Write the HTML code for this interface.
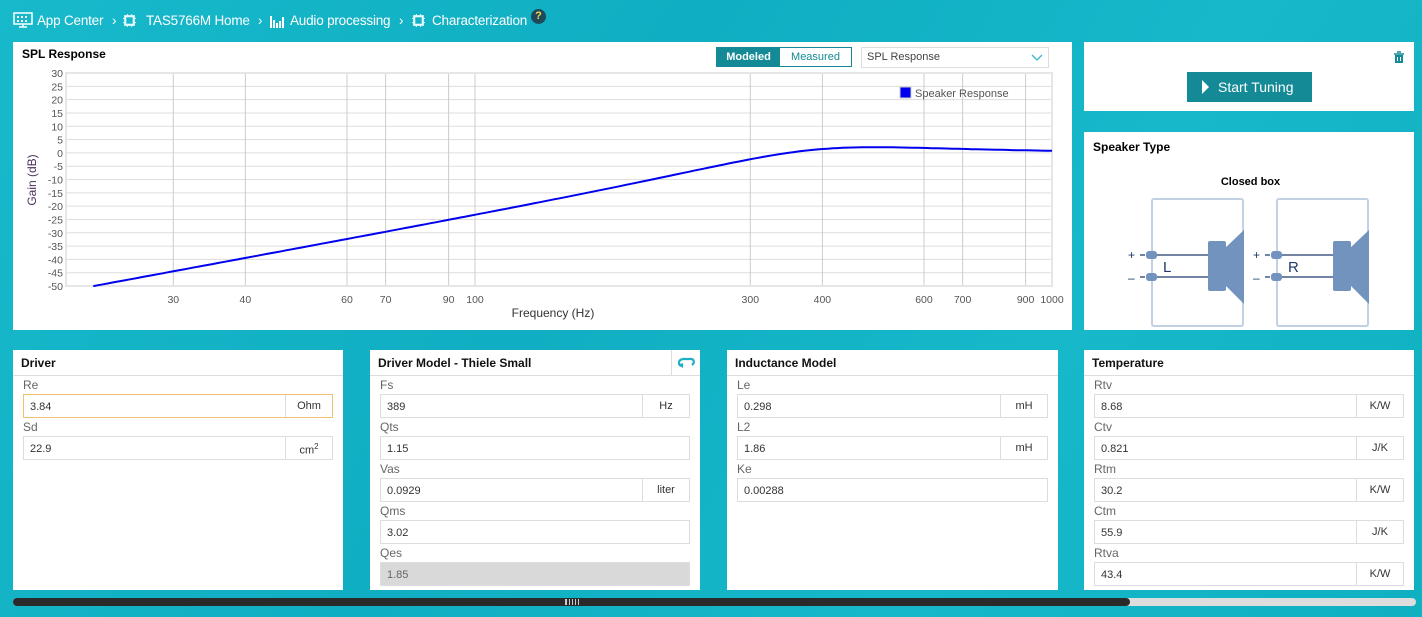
<!DOCTYPE html>
<html><head><meta charset="utf-8">
<style>
*{box-sizing:border-box;margin:0;padding:0}
body{width:1422px;height:617px;overflow:hidden;font-family:"Liberation Sans",Arial,sans-serif;background:linear-gradient(120deg,#17b9cb 0%,#10aec2 40%,#16b8ca 70%,#0fb0c2 100%);position:relative}
.c{position:absolute;top:13px;color:#fff;font-size:13.5px;white-space:nowrap;letter-spacing:-0.2px}
.panel{position:absolute;background:#fff}
.hd{height:26px;border-bottom:1px solid #ddd;font-weight:bold;font-size:12px;padding:6px 8px;color:#111}
.lbl{font-size:12px;color:#666;margin:2px 0 0 10px;height:15px;line-height:15px}
.inp{margin:1px 10px 0 10px;height:24px;border:1px solid #ddd;display:flex;font-size:11px;color:#333}
.inp .v{flex:1;padding:6px 6px}
.inp .u{width:47px;border-left:1px solid #ddd;text-align:center;padding-top:5px}
</style></head><body>
<svg width="20" height="16" viewBox="0 0 20 16" style="position:absolute;left:13px;top:12px"><rect x="1" y="1" width="18" height="11" fill="none" stroke="#fff" stroke-width="1.5"/><g fill="#fff"><rect x="4" y="4" width="2" height="2"/><rect x="8" y="4" width="2" height="2"/><rect x="12" y="4" width="2" height="2"/><rect x="4" y="8" width="2" height="2"/><rect x="8" y="8" width="2" height="2"/><rect x="12" y="8" width="2" height="2"/></g><path d="M10 12v3M6 15h8" stroke="#fff" stroke-width="1.5"/></svg>
<div class="c" style="left:37px">App Center</div>
<div class="c" style="left:112px">›</div>
<svg width="15" height="15" viewBox="0 0 14 14" style="position:absolute;left:122px;top:13px"><rect x="3" y="3" width="8" height="8" fill="none" stroke="#e8fafc" stroke-width="2"/><g stroke="#e8fafc"><path d="M1 5h2M1 9h2M11 5h2M11 9h2M5 1v2M9 1v2M5 11v2M9 11v2"/></g></svg>
<div class="c" style="left:146px">TAS5766M Home</div>
<div class="c" style="left:258px">›</div>
<svg width="16" height="14" viewBox="0 0 16 14" style="position:absolute;left:269px;top:14px" fill="#fff"><rect x="1" y="2" width="2" height="12"/><rect x="4" y="6" width="2" height="8"/><rect x="7" y="9" width="2" height="5"/><rect x="10" y="7" width="2" height="7"/><rect x="13" y="3" width="2" height="11"/></svg>
<div class="c" style="left:290px">Audio processing</div>
<div class="c" style="left:399px">›</div>
<svg width="15" height="15" viewBox="0 0 14 14" style="position:absolute;left:411px;top:13px"><rect x="3" y="3" width="8" height="8" fill="none" stroke="#e8fafc" stroke-width="2"/><g stroke="#e8fafc"><path d="M1 5h2M1 9h2M11 5h2M11 9h2M5 1v2M9 1v2M5 11v2M9 11v2"/></g></svg>
<div class="c" style="left:432px">Characterization</div>
<div style="position:absolute;left:531px;top:9px;width:15px;height:15px;border-radius:50%;background:#1c4a5a;color:#ffd84a;font-size:11px;font-weight:bold;text-align:center;line-height:15px">?</div>

<div class="panel" style="left:13px;top:42px;width:1059px;height:288px">
<div style="position:absolute;left:9px;top:5px;font-weight:bold;font-size:12px">SPL Response</div>
<div style="position:absolute;left:703px;top:5px;width:136px;height:20px;border:1px solid #148a96;display:flex;font-size:11px">
<div style="width:63px;background:#148a96;color:#fff;font-weight:bold;text-align:center;line-height:18px">Modeled</div>
<div style="flex:1;color:#148a96;text-align:center;line-height:18px">Measured</div></div>
<div style="position:absolute;left:848px;top:5px;width:188px;height:21px;border:1px solid #ddd;font-size:11px;color:#444;padding:3px 5px">SPL Response<svg width="12" height="8" style="position:absolute;right:5px;top:6px"><path d="M1 1l5 5 5-5" fill="none" stroke="#3cb4d0" stroke-width="1.3"/></svg></div>
</div>
<svg id="chart" width="1422" height="340" style="position:absolute;left:0;top:0"></svg>

<div class="panel" style="left:1084px;top:42px;width:330px;height:69px">
<svg width="12" height="13" viewBox="0 0 12 13" style="position:absolute;left:309px;top:9px"><path d="M4 1h4M1 3h10" stroke="#148a96" stroke-width="1.6"/><path d="M2 4h8v8H2z" fill="#148a96"/><path d="M4.5 6v4M7.5 6v4" stroke="#fff" stroke-width="1"/></svg>
<div style="position:absolute;left:103px;top:30px;width:125px;height:30px;background:#148a96;color:#fff;font-size:14px;line-height:30px;padding-left:31px">Start Tuning</div>
<svg width="8" height="14" style="position:absolute;left:118px;top:38px"><path d="M0 0L7 7 0 14z" fill="#fff"/></svg>
</div>

<div class="panel" style="left:1084px;top:132px;width:330px;height:198px">
<div style="position:absolute;left:9px;top:8px;font-weight:bold;font-size:12px">Speaker Type</div>
<div style="position:absolute;left:0;width:330px;top:44px;text-align:center;font-weight:bold;font-size:11px;padding-left:3px">Closed box</div>
<svg width="330" height="198" style="position:absolute;left:0;top:0">
<g id="spk">
<rect x="68" y="67" width="91" height="127" fill="none" stroke="#c2d0e3" stroke-width="2" rx="2"/>
<path d="M63 123h61M63 145h61" stroke="#1d3a6a" stroke-width="1.2"/>
<text x="44" y="127" font-size="12" fill="#1d3a6a" font-family="Liberation Sans">+</text>
<text x="44" y="150" font-size="12" fill="#1d3a6a" font-family="Liberation Sans">–</text>
<path d="M56 123h5M56 145h5" stroke="#1d3a6a" stroke-width="1.2"/>
<rect x="62" y="119" width="11" height="8" rx="3" fill="#7393bf"/>
<rect x="62" y="141" width="11" height="8" rx="3" fill="#7393bf"/>
<rect x="124" y="109" width="18" height="50" rx="2" fill="#7393bf"/>
<path d="M140 117L160 98V172L140 152z" fill="#7393bf"/>
</g>
<use href="#spk" x="125"/>
<text x="79" y="140" font-size="15" fill="#1d3a6a" font-family="Liberation Sans">L</text>
<text x="204" y="140" font-size="15" fill="#1d3a6a" font-family="Liberation Sans">R</text>
</svg>
</div>

<div class="panel" style="left:13px;top:350px;width:330px;height:240px">
<div class="hd">Driver</div>
<div class="lbl">Re</div><div class="inp" style="border-color:#f0c070"><div class="v">3.84</div><div class="u">Ohm</div></div>
<div class="lbl">Sd</div><div class="inp"><div class="v">22.9</div><div class="u">cm<sup style="font-size:8px">2</sup></div></div>
</div>

<div class="panel" style="left:370px;top:350px;width:330px;height:240px">
<div class="hd">Driver Model - Thiele Small</div>
<div style="position:absolute;right:0;top:0;width:29px;height:26px;border-left:1px solid #ddd;border-bottom:1px solid #ddd"><svg width="18" height="12" viewBox="0 0 18 12" style="margin:7px 5px"><path d="M4 9C1 7 1 3 6 2h8c3 0 4 4 1 6" fill="none" stroke="#1fb0c8" stroke-width="2.2"/><path d="M1 8l5 3 0-5z" fill="#1fb0c8"/></svg></div>
<div class="lbl">Fs</div><div class="inp"><div class="v">389</div><div class="u">Hz</div></div>
<div class="lbl">Qts</div><div class="inp"><div class="v">1.15</div></div>
<div class="lbl">Vas</div><div class="inp"><div class="v">0.0929</div><div class="u">liter</div></div>
<div class="lbl">Qms</div><div class="inp"><div class="v">3.02</div></div>
<div class="lbl">Qes</div><div class="inp" style="background:#d9d9d9"><div class="v" style="color:#666">1.85</div></div>
</div>

<div class="panel" style="left:727px;top:350px;width:331px;height:240px">
<div class="hd">Inductance Model</div>
<div class="lbl">Le</div><div class="inp"><div class="v">0.298</div><div class="u">mH</div></div>
<div class="lbl">L2</div><div class="inp"><div class="v">1.86</div><div class="u">mH</div></div>
<div class="lbl">Ke</div><div class="inp"><div class="v">0.00288</div></div>
</div>

<div class="panel" style="left:1084px;top:350px;width:330px;height:240px">
<div class="hd">Temperature</div>
<div class="lbl">Rtv</div><div class="inp"><div class="v">8.68</div><div class="u">K/W</div></div>
<div class="lbl">Ctv</div><div class="inp"><div class="v">0.821</div><div class="u">J/K</div></div>
<div class="lbl">Rtm</div><div class="inp"><div class="v">30.2</div><div class="u">K/W</div></div>
<div class="lbl">Ctm</div><div class="inp"><div class="v">55.9</div><div class="u">J/K</div></div>
<div class="lbl">Rtva</div><div class="inp"><div class="v">43.4</div><div class="u">K/W</div></div>
</div>

<div style="position:absolute;left:13px;top:598px;width:1403px;height:8px;border-radius:4px;background:#ddd"></div>
<div style="position:absolute;left:13px;top:598px;width:1117px;height:8px;border-radius:4px;background:#2a2a2a"></div>
<div style="position:absolute;left:565px;top:599px;width:14px;height:6px;border-left:1px solid #ccc;border-right:1px solid #ccc;background:repeating-linear-gradient(90deg,#ccc 0 1px,transparent 1px 3px)"></div>

<script>
(function(){
var s=document.getElementById('chart'),h='';
function X(f){return 475+577*Math.log10(f/100);}
function Y(d){return 73+(30-d)*2.6625;}
for(var d=30;d>=-50;d-=5){var y=Y(d);h+='<line x1="66" x2="1052" y1="'+y+'" y2="'+y+'" stroke="#ddd"/>';
h+='<text x="63" y="'+(y+4)+'" text-anchor="end" font-size="10.5" fill="#555" font-family="Liberation Sans">'+d+'</text>';}
[30,40,60,70,90,100,300,400,600,700,900,1000].forEach(function(f){var x=X(f);h+='<line x1="'+x+'" x2="'+x+'" y1="73" y2="286" stroke="#ccc"/>';
h+='<text x="'+x+'" y="303" text-anchor="middle" font-size="10.5" fill="#555" font-family="Liberation Sans">'+f+'</text>';});
h+='<rect x="66" y="73" width="986" height="213" fill="none" stroke="#e6e6e6" stroke-width="2"/>';
var p='',fc=389,Q=1.15;
for(var f=21.8;f<=1000;f*=1.02){var r=f/fc,r2=r*r,m=r2/Math.sqrt((1-r2)*(1-r2)+r2/(Q*Q));p+=(p?'L':'M')+X(f).toFixed(1)+' '+Y(20*Math.log10(m)).toFixed(1);}
var r=1000/fc,r2=r*r;p+='L1052 '+Y(20*Math.log10(r2/Math.sqrt((1-r2)*(1-r2)+r2/(Q*Q)))).toFixed(1);
h+='<path d="'+p+'" fill="none" stroke="#0000ee" stroke-width="2"/>';
h+='<text x="553" y="317" text-anchor="middle" font-size="12" fill="#333" font-family="Liberation Sans">Frequency (Hz)</text>';
h+='<text transform="translate(36 180) rotate(-90)" text-anchor="middle" font-size="12" fill="#4a3060" font-family="Liberation Sans">Gain (dB)</text>';
h+='<rect x="900" y="87" width="11" height="11" fill="#0000ee" stroke="#ccc"/><text x="915" y="97" font-size="11" fill="#555" font-family="Liberation Sans">Speaker Response</text>';
s.innerHTML=h;})();
</script>
</body></html>
